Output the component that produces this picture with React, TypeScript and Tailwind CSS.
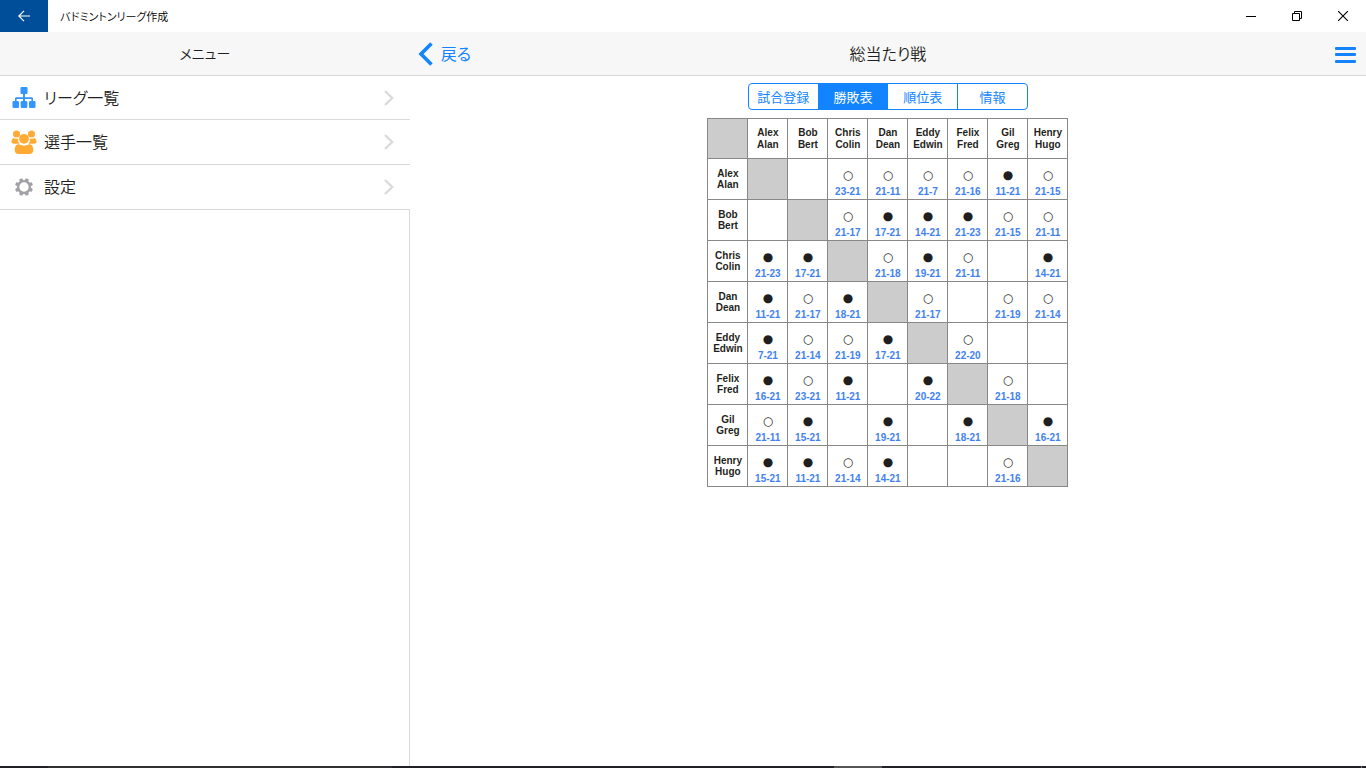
import { useState } from "react";

const menuItems = [
  { label: "リーグ一覧", icon: "league" },
  { label: "選手一覧", icon: "players" },
  { label: "設定", icon: "settings" },
];

const tabs = ["試合登録", "勝敗表", "順位表", "情報"];

const players = [
  ["Alex", "Alan"],
  ["Bob", "Bert"],
  ["Chris", "Colin"],
  ["Dan", "Dean"],
  ["Eddy", "Edwin"],
  ["Felix", "Fred"],
  ["Gil", "Greg"],
  ["Henry", "Hugo"],
];

// one row per player, an empty string is a match not played yet
const scores = [
  ["", "", "23-21", "21-11", "21-7", "21-16", "11-21", "21-15"],
  ["", "", "21-17", "17-21", "14-21", "21-23", "21-15", "21-11"],
  ["21-23", "17-21", "", "21-18", "19-21", "21-11", "", "14-21"],
  ["11-21", "21-17", "18-21", "", "21-17", "", "21-19", "21-14"],
  ["7-21", "21-14", "21-19", "17-21", "", "22-20", "", ""],
  ["16-21", "23-21", "11-21", "", "20-22", "", "21-18", ""],
  ["21-11", "15-21", "", "19-21", "", "18-21", "", "16-21"],
  ["15-21", "11-21", "21-14", "14-21", "", "", "21-16", ""],
];

const isWin = (score: string) => {
  const [own, other] = score.split("-").map(Number);
  return own > other;
};

const MenuIcon = ({ name }: { name: string }) => {
  if (name === "league") {
    return (
      <svg viewBox="0 0 24 22" className="w-6 h-[22px]" fill="#3395ff" aria-hidden="true">
        <rect x="8.5" y="0" width="7" height="7" rx="1" />
        <path d="M3 15v-3.2c0-1 .5-1.500 1.500-1.500H11V7h2v3.300h6.500c1 0 1.500.5 1.500 1.500V15h-1.600v-3H13v3h-2v-3H4.600v3z" />
        <rect x="0.500" y="14" width="6.500" height="7" rx="1.300" />
        <rect x="8.700" y="14" width="6.600" height="7" rx="1.300" />
        <rect x="17" y="14" width="6.500" height="7" rx="1.300" />
      </svg>
    );
  }
  if (name === "players") {
    return (
      <svg viewBox="0 0 26 24" className="w-[26px] h-6" fill="#ffab33" aria-hidden="true">
        <circle cx="5.500" cy="4" r="3.500" />
        <circle cx="20.500" cy="4" r="3.500" />
        <circle cx="13" cy="8.800" r="4.900" />
        <path d="M2.800 7.900c1.500 1 3.500 1.100 4.500.6-.5 2.200.2 4 1.200 5.200H3C.8 13.700.3 12.500.5 11c.2-1.400.9-2.600 2.300-3.100z" />
        <path d="M23.200 7.900c-1.500 1-3.500 1.100-4.500.6.5 2.200-.2 4-1.200 5.200H23c2.200 0 2.700-1.200 2.500-2.700-.2-1.400-.9-2.600-2.300-3.100z" />
        <path d="M8 14.200c3.100 1.900 6.900 1.900 10 0 3.100 0 4.300 2.600 4.300 5.800 0 2.600-1.500 4-3.900 4H7.600c-2.400 0-3.900-1.400-3.900-4 0-3.200 1.200-5.800 4.300-5.800z" />
      </svg>
    );
  }
  return (
    <svg viewBox="-9 -9 18 18" className="w-[18px] h-[18px]" aria-hidden="true">
      <circle r="5.900" fill="none" stroke="#a2a2a6" strokeWidth="2.400" />
      <g fill="#a2a2a6">
        {[22.5, 67.5, 112.5, 157.5, 202.5, 247.5, 292.5, 337.5].map((angle) => (
          <path key={angle} d="M-2.200 -6L-1.400 -9H1.400L2.200 -6Z" transform={`rotate(${angle})`} />
        ))}
      </g>
    </svg>
  );
};

const PlayerName = ({ name }: { name: string[] }) => (
  <>
    {name[0]}
    <br />
    {name[1]}
  </>
);

const TitleBar = () => (
  <div className="flex h-8 items-center bg-white text-black">
    <button aria-label="戻る" className="flex h-8 w-12 items-center justify-center bg-[#004e9a]">
      <svg viewBox="0 0 12 12" className="h-3 w-3" fill="none" stroke="#fff" strokeWidth="1.200" aria-hidden="true">
        <path d="M12 6H.8M6 .8L.8 6L6 11.200" />
      </svg>
    </button>
    <span className="ml-3 flex-1 text-[11px]">バドミントンリーグ作成</span>
    <button aria-label="最小化" className="flex h-8 w-[46px] items-center justify-center">
      <svg viewBox="0 0 10 10" className="h-[10px] w-[10px]" aria-hidden="true">
        <path d="M0 5h10v1H0z" />
      </svg>
    </button>
    <button aria-label="元に戻す" className="flex h-8 w-[46px] items-center justify-center">
      <svg viewBox="0 0 10 10" className="h-[10px] w-[10px]" fill="none" stroke="#000" aria-hidden="true">
        <path d="M.5 2.500h7v7h-7zM2.500 2.500v-2h7v7h-2" />
      </svg>
    </button>
    <button aria-label="閉じる" className="flex h-8 w-[46px] items-center justify-center">
      <svg viewBox="0 0 10 10" className="h-[10px] w-[10px]" fill="none" stroke="#000" strokeWidth="1.100" aria-hidden="true">
        <path d="M0 0l10 10M10 0L0 10" />
      </svg>
    </button>
  </div>
);

const Menu = () => (
  <aside className="flex w-[30%] flex-col">
    <header className="flex h-11 items-center justify-center border-b border-[#d9d9d9] bg-[#f7f7f7]">
      <h1 className="pb-[2px] text-sm">メニュー</h1>
    </header>
    <ul>
      {menuItems.map((item) => (
        <li key={item.label} className="h-[45px] border-b border-[#d9d9d9] first:h-11">
          <a href="#" className="flex h-full items-center pr-4">
            <span className="ml-[11px] flex w-[26px] justify-center">
              <MenuIcon name={item.icon} />
            </span>
            <span className="ml-[7px] flex-1 pb-[2px] text-base">{item.label}</span>
            <svg viewBox="0 0 10 16" className="h-4 w-[10px]" fill="none" stroke="#dadada" strokeWidth="2.400" aria-hidden="true">
              <path d="M1 1l7.200 7L1 15" />
            </svg>
          </a>
        </li>
      ))}
    </ul>
    <div className="flex-1 border-r border-[#d9d9d9]" />
  </aside>
);

const ResultTable = () => (
  <table className="mt-2 table-fixed border-collapse text-center text-[10px] font-bold font-['Liberation_Sans',Arial,'Noto_Sans_CJK_JP',sans-serif]">
    <thead>
      <tr className="h-10 leading-3">
        <td className="w-10 border border-[#888] bg-[#ccc]" />
        {players.map((name) => (
          <th key={name[0]} scope="col" className="w-10 border border-[#888]">
            <PlayerName name={name} />
          </th>
        ))}
      </tr>
    </thead>
    <tbody>
      {players.map((name, row) => (
        <tr key={name[0]} className="h-[41px]">
          <th scope="row" className="border border-[#888] leading-[11px]">
            <PlayerName name={name} />
          </th>
          {scores[row].map((score, col) => (
            <td key={col} className={row === col ? "border border-[#888] bg-[#ccc]" : "border border-[#888] align-bottom"}>
              {score && (
                <>
                  <span className="block text-xs leading-5 font-normal font-['DejaVu_Sans','Noto_Sans_CJK_JP',sans-serif]">
                    {isWin(score) ? "○" : "●"}
                  </span>
                  <span className="block leading-[14px] text-[#4282ef]">{score}</span>
                </>
              )}
            </td>
          ))}
        </tr>
      ))}
    </tbody>
  </table>
);

const App = () => {
  const [active, setActive] = useState(1);

  return (
    <div className="flex min-h-screen flex-col bg-white text-[#1f1f21] font-[350] font-['Noto_Sans_CJK_JP',sans-serif] [font-feature-settings:'palt']">
      <TitleBar />
      <div className="flex flex-1">
        <Menu />
        <main className="flex flex-1 flex-col">
          <header className="grid h-11 grid-cols-3 items-center border-b border-[#d9d9d9] bg-[#f7f7f7]">
            <button className="flex items-center justify-self-start pl-2 text-base font-normal text-[#1284ff]">
              <svg viewBox="0 0 15 24" className="mr-2 h-6 w-[15px]" fill="none" stroke="#1284ff" strokeWidth="3.600" aria-hidden="true">
                <path d="M13.500 1.500L3 12l10.500 10.500" />
              </svg>
              <span className="pb-[2px]">戻る</span>
            </button>
            <h2 className="justify-self-center pb-[2px] text-base">総当たり戦</h2>
            <button aria-label="メニュー" className="mr-[10px] justify-self-end">
              <svg viewBox="0 0 21 19" className="block h-[19px] w-[21px]" fill="#1284ff" aria-hidden="true">
                <rect y="3" width="21" height="3" rx="1" />
                <rect y="9" width="21" height="3" rx="1" />
                <rect y="16" width="21" height="3" rx="1" />
              </svg>
            </button>
          </header>
          <div className="flex flex-col items-center pt-[7px]">
            <div className="flex h-[27px] w-[280px] overflow-hidden rounded border border-[#1284ff]">
              {tabs.map((tab, index) => (
                <button
                  key={tab}
                  aria-pressed={index === active}
                  onClick={() => setActive(index)}
                  className={
                    index === active
                      ? "flex-1 border-l border-[#1284ff] bg-[#1284ff] text-[13px] font-normal text-white first:border-l-0"
                      : "flex-1 border-l border-[#1284ff] text-[13px] font-normal text-[#1284ff] first:border-l-0"
                  }
                >
                  {tab}
                </button>
              ))}
            </div>
            <ResultTable />
          </div>
        </main>
      </div>
      {/* edge of the hidden taskbar */}
      <div className="flex h-[2px] bg-[#222226]">
        <div className="w-12 bg-[#222226]" />
        <div className="w-[344px] bg-[#313134]" />
        <div className="ml-[442px] w-12 bg-[#555558]" />
        <div className="mr-1 ml-auto w-px bg-[#77777a]" />
      </div>
    </div>
  );
};

export default App;
